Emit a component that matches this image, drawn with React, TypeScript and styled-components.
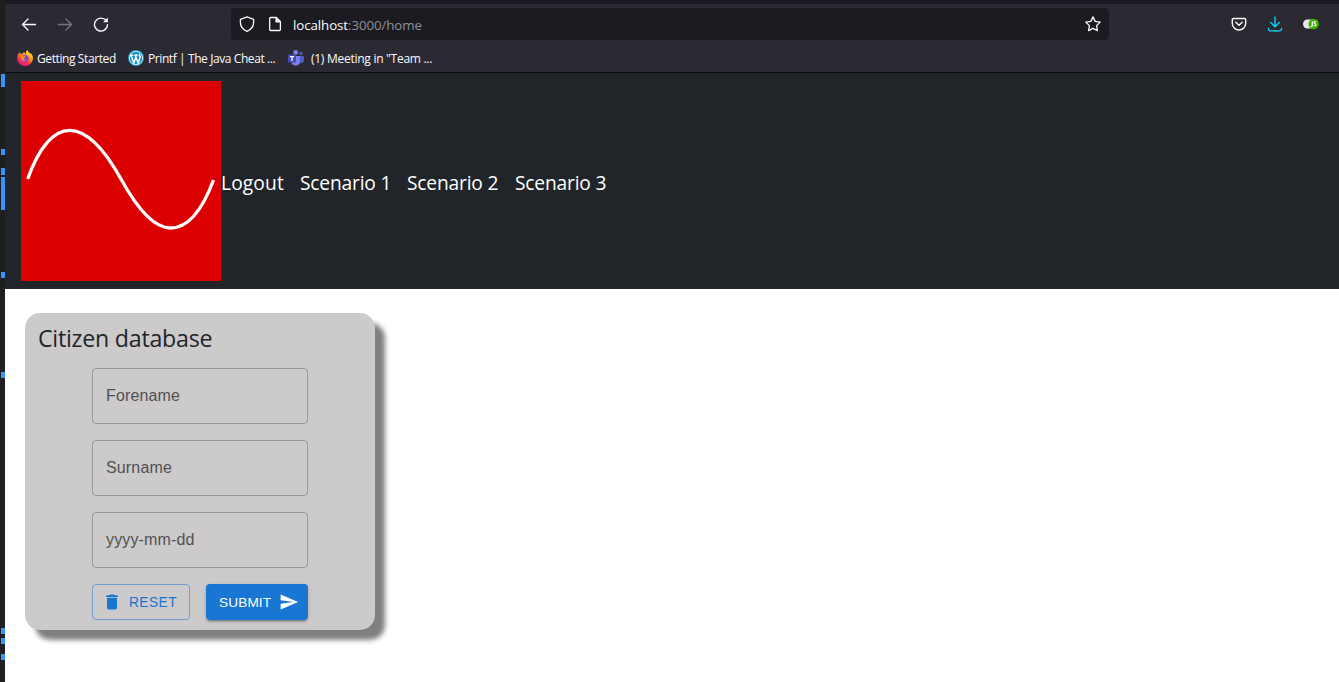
import React from "react";
import styled, { createGlobalStyle } from "styled-components";

const GlobalStyle = createGlobalStyle`
  * { box-sizing: border-box; }
  html, body { margin: 0; padding: 0; background: #fff; overflow: hidden; }
  svg { display: block; flex: none; }
`;

const uiFont = `"Open Sans", "Noto Sans", sans-serif`;

const Screen = styled.div`
  display: flex;
  width: 1339px;
  height: 682px;
  overflow: hidden;
  font-family: ${uiFont};
`;

const Ruler = styled.div`
  display: flex;
  flex-direction: column;
  align-items: flex-end;
  flex: none;
  width: 5px;
  height: 682px;
  background: #1f1f1f;
`;

const Mark = styled.div<{ $gap: number; $size: number }>`
  flex: none;
  width: 4px;
  height: ${(p) => p.$size}px;
  margin-top: ${(p) => p.$gap}px;
  background: #3794ff;
`;

const Browser = styled.div`
  display: flex;
  flex-direction: column;
  width: 1334px;
`;

const Chrome = styled.div`
  height: 73px;
  border-top: 4px solid #1c1b22;
  border-bottom: 1px solid #0c0c0d;
  background: #2b2a33;
`;

const Toolbar = styled.div`
  display: flex;
  align-items: center;
  height: 40px;
`;

const NavIcons = styled.div`
  display: flex;
  gap: 20px;
  width: 226px;
  padding-left: 16px;
`;

const AddressBar = styled.div`
  display: flex;
  align-items: center;
  width: 878px;
  height: 32px;
  padding: 0 8px;
  border-radius: 4px;
  background: #1c1b22;
`;

const PageIcon = styled.span`
  margin: 0 10px 0 12px;
`;

const Url = styled.div`
  flex: 1;
  padding-top: 1px;
  font-size: 13.3px;
  line-height: 18px;
  letter-spacing: -0.08px;
  color: #8f8f98;
`;

const Host = styled.span`
  color: #fbfbfe;
`;

const Extensions = styled.div`
  display: flex;
  gap: 20px;
  margin-left: 122px;
`;

const Bookmarks = styled.div`
  display: flex;
  align-items: center;
  height: 28px;
  padding-left: 12px;
`;

const Bookmark = styled.div<{ $width: number; $gap?: number; $spacing: number }>`
  display: flex;
  align-items: center;
  gap: ${(p) => p.$gap ?? 4}px;
  width: ${(p) => p.$width}px;
  font-size: 12px;
  line-height: 16px;
  letter-spacing: ${(p) => p.$spacing}px;
  white-space: nowrap;
  color: #fbfbfe;
`;

const BookmarkLabel = styled.span`
  padding-top: 2px;
`;

const Header = styled.header`
  display: flex;
  align-items: center;
  height: 216px;
  padding: 0 16px;
  background: #212529;
`;

const Nav = styled.nav`
  display: flex;
  padding-top: 4px;
`;

const NavLink = styled.a<{ $width: number; $spacing?: number }>`
  width: ${(p) => p.$width}px;
  font-size: 19.2px;
  line-height: 30px;
  letter-spacing: ${(p) => p.$spacing ?? -0.18}px;
  white-space: nowrap;
  color: #fff;
`;

const Main = styled.main`
  padding: 24px 20px;
`;

const Card = styled.section`
  display: flex;
  flex-direction: column;
  align-items: center;
  width: 350px;
  height: 317px;
  padding-top: 11px;
  border-radius: 15px;
  background: #cccacb;
  box-shadow: 10px 10px 5px #808080;
`;

const Title = styled.h1`
  align-self: stretch;
  margin: 0 0 15px;
  padding-left: 13px;
  font-size: 23.2px;
  font-weight: 400;
  line-height: 29px;
  letter-spacing: -0.24px;
  color: #212529;
`;

const Form = styled.div`
  display: flex;
  flex-direction: column;
  gap: 16px;
  width: 216px;
  font-family: "Liberation Sans", Arial, sans-serif;
`;

const Field = styled.div`
  height: 56px;
  padding: 0 13px;
  border: 1px solid #999798;
  border-radius: 4px;
  font-size: 16px;
  line-height: 54px;
  letter-spacing: 0.15px;
  color: #525152;
`;

const Buttons = styled.div`
  display: flex;
  gap: 16px;
`;

const Button = styled.button<{ $primary?: boolean }>`
  display: flex;
  align-items: center;
  justify-content: space-between;
  width: ${(p) => (p.$primary ? 102 : 98)}px;
  height: 36px;
  padding: ${(p) => (p.$primary ? "0 9px 0 13px" : "0 12px 0 9px")};
  border: ${(p) => (p.$primary ? "none" : "1px solid #6f9fd0")};
  border-radius: 4px;
  background: ${(p) => (p.$primary ? "#1976d2" : "transparent")};
  box-shadow: ${(p) =>
    p.$primary
      ? "0 3px 1px -2px rgba(0,0,0,.2), 0 2px 2px rgba(0,0,0,.14), 0 1px 5px rgba(0,0,0,.12)"
      : "none"};
  font-family: inherit;
  font-size: ${(p) => (p.$primary ? 13.6 : 13.8)}px;
  letter-spacing: ${(p) => (p.$primary ? 0.15 : 0.4)}px;
  color: ${(p) => (p.$primary ? "#fff" : "#1976d2")};
`;

const Stroke = ({ children, color = "#fbfbfe", width = 1.3 }: { children: React.ReactNode; color?: string; width?: number }) => (
  <svg width="16" height="16" viewBox="0 0 16 16" fill="none" stroke={color} strokeWidth={width} strokeLinecap="round" strokeLinejoin="round">
    {children}
  </svg>
);

const FirefoxLogo = () => (
  <svg width="16" height="16" viewBox="0 0 16 16">
    <defs>
      <linearGradient id="flame" x1="0.85" y1="0.05" x2="0.25" y2="0.95">
        <stop offset="0" stopColor="#fff44f" />
        <stop offset="0.4" stopColor="#ff980e" />
        <stop offset="0.7" stopColor="#ff3647" />
        <stop offset="1" stopColor="#e31587" />
      </linearGradient>
    </defs>
    <path d="M2.6 2.2c.2.8.5 1.2.9 1.5.6-.2 1.300-.2 2 0C6 2.800 7 2.200 7.600 2c-.3.900.4 1.600 1.400 1.900-.4-1.500.1-3 1.500-3.900.2 1.700 2 2.500 3 4 .2-.3.2-.7.1-1C15 4.200 16 6.200 16 8.200A7.900 7.800 0 0 1 .1 8.200C.1 5.800 1.100 3.500 2.600 2.200z" fill="url(#flame)" />
    <circle cx="8" cy="8.500" r="3.500" fill="#7542e5" />
    <path d="M3.500 5.200c1.300-.5 2.500.1 3.100.9 1 0 1.900.1 1.900.6 0 .8-1.400.9-1.800 1.700 0 1.200 1.700 1.800 3.200.8-1 2.200-4.500 2.400-5.900-.2-.7-1.400-.8-2.800-.5-3.800z" fill="#ff8a1e" />
  </svg>
);

const WordPressLogo = () => (
  <svg width="16" height="16" viewBox="0 0 16 16" fill="none">
    <circle cx="8" cy="8" r="8" fill="#1594c5" />
    <circle cx="8" cy="8" r="6.700" stroke="#fff" strokeWidth="0.800" />
    <path d="M1.900 5.200h3.200M6.300 5.200h3.300M3 5.300l2.800 7.600L8 6.700M7.300 5.300l2.800 7.600 2-5.500c.6-1.700-1.400-2.300-.6-3.600" stroke="#fff" strokeWidth="1.500" />
  </svg>
);

const TeamsLogo = () => (
  <svg width="16" height="16" viewBox="0 0 16 16">
    <circle cx="12.900" cy="3.500" r="1.700" fill="#5059c9" />
    <path d="M10 6h5.200c.5 0 .8.3.8.800v3.700a2.800 2.800 0 0 1-4 2.500z" fill="#5059c9" />
    <circle cx="7.700" cy="2.500" r="2.400" fill="#7b83eb" />
    <path d="M4 6h7.300c.4 0 .7.300.7.700v4.800A4.300 4.400 0 0 1 3.500 12z" fill="#7b83eb" />
    <rect y="4.500" width="8" height="8" rx="0.700" fill="#434bb5" />
    <path d="M1.900 6.600h4.200M4 6.600v4.300" stroke="#fff" strokeWidth="1.300" />
  </svg>
);

const JsToggle = () => (
  <svg width="16" height="16" viewBox="0 0 16 16">
    <rect y="3.500" width="13" height="9" rx="4.500" fill="#e8e8e8" />
    <circle cx="10.700" cy="8" r="5.200" fill="#3db100" />
    <path d="M9.300 5.300v4.200q0 1-1.700.8M13.500 5.700h-1.800q-.7 0-.7.900 0 .800 1 1.100 1 .3 1 1.100 0 1-1 1h-1.400" stroke="#fff" strokeWidth="1.100" fill="none" />
  </svg>
);

const SineLogo = () => (
  <svg width="200" height="200" viewBox="0 0 200 200">
    <rect width="200" height="200" fill="#dd0000" />
    <path d="M6.700 98C18 66 33 49.300 48.500 49.300C67 49.300 85 71 100 98C117 129 134 147 149.500 147C166 147 181 130 192.500 99" fill="none" stroke="#fff" strokeWidth="3.300" />
  </svg>
);

const marks = [
  [74, 13], [62, 6], [13, 7], [2, 33], [62, 6], [94, 6], [250, 6], [4, 6], [10, 6],
];

export default function App() {
  return (
    <Screen>
      <GlobalStyle />
      <Ruler>
        {marks.map(([gap, size], i) => (
          <Mark key={i} $gap={gap} $size={size} />
        ))}
      </Ruler>
      <Browser>
        <Chrome>
          <Toolbar>
            <NavIcons>
              <Stroke><path d="M14.500 8.500h-13M7 3L1.500 8.500 7 14" /></Stroke>
              <Stroke color="#77767e"><path d="M1.500 8.500h13M9 3l5.500 5.500L9 14" /></Stroke>
              <Stroke width={1.400}>
                <path d="M13.200 4.700A6.500 6.500 0 1 0 14.500 8.800" />
                <path d="M14.800 1.600v4.700h-4.700z" fill="#fbfbfe" stroke="none" />
              </Stroke>
            </NavIcons>
            <AddressBar>
              <Stroke><path d="M8 .8L14.600 3.300v3.200C14.500 10.500 12 13.700 8 15.300 4 13.700 1.500 10.500 1.400 6.500V3.300z" /></Stroke>
              <PageIcon>
                <Stroke>
                  <path d="M3.700 1.500h5.500l4.200 4.200v7.800a1 1 0 0 1-1 1H3.700a1 1 0 0 1-1-1v-11a1 1 0 0 1 1-1z" />
                  <path d="M9 1.500v4.300h4.300z" fill="#fbfbfe" />
                </Stroke>
              </PageIcon>
              <Url><Host>localhost</Host>:3000/home</Url>
              <Stroke><path d="M8 .9l2.200 4.500 5 .7-3.600 3.500.8 5L8 12.300l-4.400 2.300.8-5L.8 6.100l5-.7z" /></Stroke>
            </AddressBar>
            <Extensions>
              <Stroke width={1.400}>
                <path d="M2.500 2.500h11a1.200 1.200 0 0 1 1.200 1.200v3.600a6.700 6.700 0 0 1-13.400 0V3.700A1.200 1.200 0 0 1 2.500 2.500z" />
                <path d="M4.800 6.300L8 9.300l3.200-3" />
              </Stroke>
              <Stroke color="#00ddff">
                <path d="M8 .8v10M3.700 6.500L8 10.800l4.300-4.300M1.500 12.500v.6a1.700 1.700 0 0 0 1.700 1.700h9.600a1.700 1.700 0 0 0 1.700-1.700v-.6" />
              </Stroke>
              <JsToggle />
            </Extensions>
          </Toolbar>
          <Bookmarks>
            <Bookmark $width={111} $spacing={-0.4}>
              <FirefoxLogo />
              <BookmarkLabel>Getting Started</BookmarkLabel>
            </Bookmark>
            <Bookmark $width={160} $spacing={-0.41}>
              <WordPressLogo />
              <BookmarkLabel>Printf | The Java Cheat ...</BookmarkLabel>
            </Bookmark>
            <Bookmark $width={160} $gap={7} $spacing={-0.27}>
              <TeamsLogo />
              <BookmarkLabel>(1) Meeting in "Team ...</BookmarkLabel>
            </Bookmark>
          </Bookmarks>
        </Chrome>
        <Header>
          <SineLogo />
          <Nav>
            <NavLink $width={79} $spacing={0.12}>Logout</NavLink>
            <NavLink $width={107}>Scenario 1</NavLink>
            <NavLink $width={108}>Scenario 2</NavLink>
            <NavLink $width={108}>Scenario 3</NavLink>
          </Nav>
        </Header>
        <Main>
          <Card>
            <Title>Citizen database</Title>
            <Form>
              <Field>Forename</Field>
              <Field>Surname</Field>
              <Field>yyyy-mm-dd</Field>
              <Buttons>
                <Button>
                  <svg width="20" height="20" viewBox="0 0 24 24" fill="currentColor">
                    <path d="M6 19c0 1.100.9 2 2 2h8c1.100 0 2-.9 2-2V7H6v12zM19 4h-3.500l-1-1h-5l-1 1H5v2h14V4z" />
                  </svg>
                  RESET
                </Button>
                <Button $primary>
                  SUBMIT
                  <svg width="20" height="20" viewBox="0 0 24 24" fill="currentColor">
                    <path d="M2.010 21L23 12 2.010 3 2 10l15 2-15 2z" />
                  </svg>
                </Button>
              </Buttons>
            </Form>
          </Card>
        </Main>
      </Browser>
    </Screen>
  );
}
